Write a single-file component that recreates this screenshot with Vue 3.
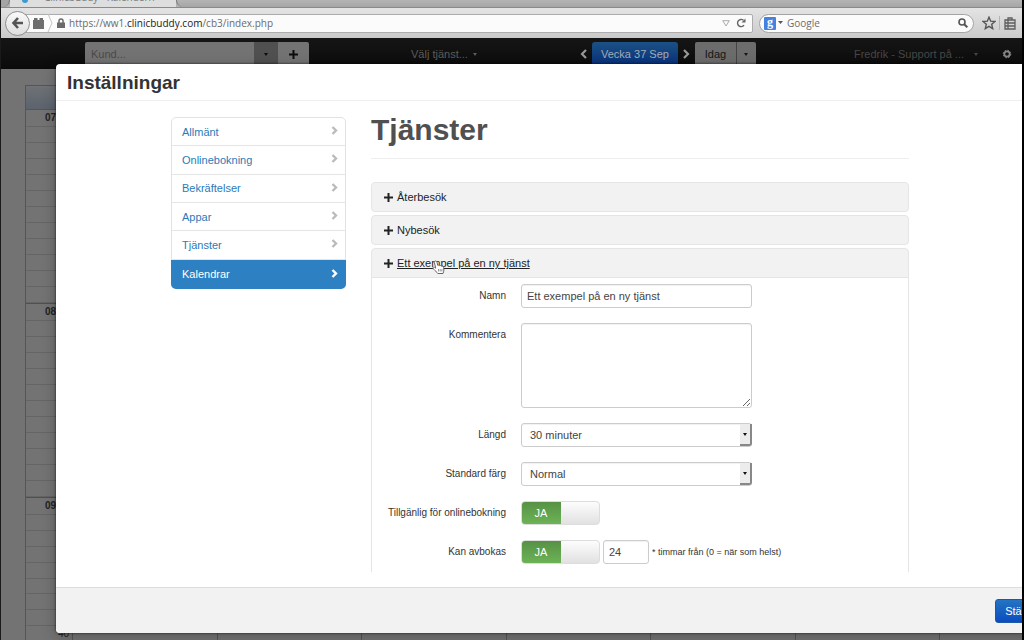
<script setup>
import { ref } from 'vue'

const navItems = ['Allmänt', 'Onlinebokning', 'Bekräftelser', 'Appar', 'Tjänster', 'Kalendrar']
const active = ref('Kalendrar')
const hours = ['07', '08', '09']
const name = ref('Ett exempel på en ny tjänst')
const comment = ref('')
const length = ref('30 minuter')
const colour = ref('Normal')
const online = ref(true)
const cancel = ref(true)
const cancelHours = ref('24')
</script>

<template>
  <div class="screen">
    <header class="browser">
      <div class="tabs">
        <span class="tab-prev"></span>
        <span class="tab"><i class="favicon"></i><span class="tab-title">Clinicbuddy - Kalendern</span></span>
        <span class="tab-rest"></span>
      </div>
      <div class="toolbar">
        <button class="back" type="button" aria-label="Tillbaka">
          <svg width="14" height="14" viewBox="0 0 14 14"><path d="M7 2 2.500 7 7 12M3 7h9" fill="none" stroke="#555" stroke-width="2.600" /></svg>
        </button>
        <div class="address">
          <svg class="site" width="11" height="11" viewBox="0 0 11 11"><path d="M0 2h11v9H0zM1 0h3.500v2H1zM6.500 0H10v2H6.500z" fill="#6d6d6d" /></svg>
          <svg class="crumb" width="6" height="18" viewBox="0 0 6 18"><path d="M1 0 5 9 1 18" fill="none" stroke="#c4c4c4" /></svg>
          <svg class="lock" width="8" height="10" viewBox="0 0 8 10"><path d="M0 4.500h8V10H0z" fill="#6a6a6a" /><path d="M2 5V3a2 2 0 0 1 4 0v2" fill="none" stroke="#6a6a6a" stroke-width="1.500" /></svg>
          <span class="url">https://ww1.<b>clinicbuddy.com</b>/cb3/index.php</span>
          <svg width="8" height="7" viewBox="0 0 8 7"><path d="M.7.7h6.600L4 6z" fill="none" stroke="#aaa" /></svg>
          <svg class="reload" width="10" height="10" viewBox="0 0 10 10"><path d="M8 7.200A3.600 3.600 0 1 1 7.500 2.300" fill="none" stroke="#666" stroke-width="1.400" /><path d="M5.500 4.500h4V.500z" fill="#666" /></svg>
        </div>
        <div class="search">
          <span class="g">g</span>
          <svg width="6" height="4" viewBox="0 0 6 4"><path d="M0 0h5L2.500 3z" fill="#555" /></svg>
          <input type="text" placeholder="Google" aria-label="Sök" />
          <svg width="10" height="10" viewBox="0 0 10 10"><circle cx="4" cy="4" r="3" fill="none" stroke="#555" stroke-width="1.600" /><path d="M6.200 6.200 9.300 9.300" stroke="#555" stroke-width="2" /></svg>
        </div>
        <svg class="star" width="14" height="14" viewBox="0 0 14 14"><path d="M7 1.200 8.700 5.200 13 5.500 9.700 8.300 10.700 12.600 7 10.300 3.300 12.600 4.300 8.300 1 5.500 5.300 5.200z" fill="none" stroke="#555" stroke-width="1.400" /></svg>
        <i class="sep"></i>
        <svg class="clip" width="12" height="13" viewBox="0 0 12 13"><path d="M1 3h10v9H1zM4 3V1h4v2M1 6h10M1 9h10M4 3.500v8.500" fill="none" stroke="#5e5e5e" stroke-width="1.300" /></svg>
      </div>
    </header>

    <nav class="appbar">
      <div class="combo">
        <input type="text" placeholder="Kund..." aria-label="Kund" />
        <button class="drop" type="button" aria-label="Visa kunder"><i class="caret"></i></button>
        <button class="add" type="button" aria-label="Ny kund"><svg width="9" height="9" viewBox="0 0 9 9"><path d="M3.500 0h2v3.500H9v2H5.500V9h-2V5.500H0v-2h3.500z" fill="#0c0c0c" /></svg></button>
      </div>
      <button class="plain pick" type="button">Välj tjänst... <i class="caret"></i></button>
      <div class="week">
        <button class="plain" type="button" aria-label="Föregående"><svg width="7" height="10" viewBox="0 0 7 10"><path d="M6 1 2 5l4 4" fill="none" stroke="#999" stroke-width="2.200" /></svg></button>
        <button class="current" type="button">Vecka 37 Sep</button>
        <button class="plain" type="button" aria-label="Nästa"><svg width="7" height="10" viewBox="0 0 7 10"><path d="M1 1l4 4-4 4" fill="none" stroke="#999" stroke-width="2.200" /></svg></button>
      </div>
      <div class="today">
        <button type="button">Idag</button>
        <button class="drop-day" type="button" aria-label="Välj datum"><i class="caret"></i></button>
      </div>
      <button class="plain user" type="button">Fredrik - Support på ... <i class="caret"></i></button>
      <button class="plain gear" type="button" aria-label="Inställningar">
        <svg width="10" height="10" viewBox="0 0 10 10"><circle cx="5" cy="5" r="2.700" fill="none" stroke="#888" stroke-width="1.800" /><circle cx="5" cy="5" r="3.800" fill="none" stroke="#888" stroke-width="1" stroke-dasharray="1.600 1.380" /></svg>
      </button>
    </nav>

    <main class="calendar">
      <div class="sheet">
        <div class="times">
          <div class="day-head"></div>
          <div v-for="h in hours" :key="h" class="hour">
            <span v-for="n in 12" :key="n" class="slot"><b v-if="n === 1">{{ h }}</b><em v-if="h === '09' && n === 9">40</em></span>
          </div>
        </div>
        <div v-for="d in 7" :key="d" class="day"></div>
      </div>
    </main>

    <section class="modal" role="dialog" aria-labelledby="dialog-title">
      <header class="modal-head"><h2 id="dialog-title">Inställningar</h2></header>
      <div class="modal-body">
        <nav class="side">
          <a v-for="item in navItems" :key="item" href="#" :class="{ active: item === active }" @click.prevent="active = item">
            {{ item }}
            <svg width="7" height="9" viewBox="0 0 7 9"><path d="M1.500 1 5 4.500 1.500 8" fill="none" stroke="currentColor" stroke-width="2.400" /></svg>
          </a>
        </nav>
        <div class="content">
          <h1>Tjänster</h1>
          <div class="accordion">
            <div class="group"><button class="toggle-head" type="button"><svg class="plus" width="9" height="9" viewBox="0 0 9 9"><path d="M3.500 0h2v3.500H9v2H5.500V9h-2V5.500H0v-2h3.500z" /></svg><span>Återbesök</span></button></div>
            <div class="group"><button class="toggle-head" type="button"><svg class="plus" width="9" height="9" viewBox="0 0 9 9"><path d="M3.500 0h2v3.500H9v2H5.500V9h-2V5.500H0v-2h3.500z" /></svg><span>Nybesök</span></button></div>
            <div class="group open">
              <button class="toggle-head hover" type="button" aria-expanded="true">
                <svg class="plus" width="9" height="9" viewBox="0 0 9 9"><path d="M3.500 0h2v3.500H9v2H5.500V9h-2V5.500H0v-2h3.500z" /></svg><span>Ett exempel på en ny tjänst</span>
                <svg class="pointer" width="13" height="15" viewBox="0 0 13 15"><path d="M3.500 1c1 0 1.300.7 1.500 1.500l.8 3c.8-.7 1.600-.4 2 .3.800-.5 1.600-.2 1.900.5.900-.3 1.700.2 1.900 1.100l.3 2.600c0 1.400-.6 2-.9 3.500H5.800C5 12 3.200 11 1.800 9.400.9 8.400.7 7.600 1.300 7.300c.9-.4 1.700.3 2.400.9L2.400 2.500C2.200 1.600 2.700 1 3.500 1z" fill="#fff" stroke="#666" /><path d="M6.500 9v2.500M8.200 9v2.500M9.900 9v2.500" stroke="#777" stroke-width=".8" /></svg>
              </button>
              <form class="form" @submit.prevent>
                <label for="name">Namn</label>
                <div class="field"><input id="name" v-model="name" class="box wide" type="text" /></div>
                <label for="comment">Kommentera</label>
                <div class="field"><textarea id="comment" v-model="comment" class="box wide"></textarea></div>
                <label for="length">Längd</label>
                <div class="field"><span class="select"><select id="length" v-model="length" class="box wide"><option>30 minuter</option><option>60 minuter</option></select><i class="arrow"><i class="caret"></i></i></span></div>
                <label for="colour">Standard färg</label>
                <div class="field"><span class="select"><select id="colour" v-model="colour" class="box wide"><option>Normal</option></select><i class="arrow"><i class="caret"></i></i></span></div>
                <label for="online">Tillgänlig för onlinebokning</label>
                <div class="field"><label class="switch"><input id="online" v-model="online" type="checkbox" /><span>JA</span></label></div>
                <label for="cancel">Kan avbokas</label>
                <div class="field">
                  <label class="switch"><input id="cancel" v-model="cancel" type="checkbox" /><span>JA</span></label>
                  <input id="cancel-hours" v-model="cancelHours" class="box small" type="text" />
                  <label class="hint" for="cancel-hours">* timmar från (0 = när som helst)</label>
                </div>
              </form>
            </div>
          </div>
        </div>
      </div>
      <footer class="modal-foot"><button class="close" type="button">Stäng</button></footer>
    </section>
  </div>
</template>

<style>
html, body { margin: 0; background: #000; overflow: hidden; }
</style>

<style scoped>
* { box-sizing: border-box; }
button, input, select, textarea { font: inherit; color: inherit; margin: 0; }
button { border: 0; padding: 0; background: none; cursor: pointer; }
svg { display: block; flex: none; }

.screen {
  position: relative;
  display: flex;
  flex-direction: column;
  height: 100vh;
  overflow: hidden;
  border-left: 1px solid #1a1a1a;
  border-right: 2px solid #000;
  background: #737373;
  font: 11px/16px "Liberation Sans", Arial, sans-serif;
  color: #333;
}

/* Browser window */
.browser { flex: none; font-family: "Open Sans", "Noto Sans", sans-serif; }
.tabs { display: flex; height: 8px; overflow: hidden; background: #b2b2b2; border-bottom: 1px solid #8a8a8a; }
.tab-prev { width: 9px; background: #a4a4a4; border-right: 1px solid #777; border-bottom-right-radius: 7px; }
.tab { display: flex; gap: 16px; width: 166px; height: 8px; padding-left: 12px; background: #dedede; overflow: hidden; }
.favicon { width: 6px; height: 3px; background: #3d9ad0; border-radius: 0 0 3px 3px; flex: none; }
.tab-title { margin-top: -11px; font-size: 10px; line-height: 16px; color: #777; white-space: nowrap; }
.tab-rest { flex: 1; border-left: 1px solid #777; border-bottom-left-radius: 7px; background: linear-gradient(#b4b4b4, #a6a6a6); }
.toolbar { display: flex; align-items: center; height: 30px; padding: 0 6px 0 4px; background: linear-gradient(#e4e4e4, #cacaca); }
.back { display: grid; place-items: center; width: 25px; height: 25px; flex: none; border: 1px solid #8e8e8e; border-radius: 50%; background: linear-gradient(#fafafa, #dedede); z-index: 1; }
.address { display: flex; align-items: center; flex: 1; min-width: 0; height: 19px; margin-left: -10px; padding: 0 6px 0 12px; border: 1px solid #acacac; border-radius: 2px; background: #fbfbfb; }
.crumb { margin: 0 4px 0 3px; }
.url { flex: 1; margin-left: 4px; font-size: 10px; color: #6b6b6b; white-space: nowrap; overflow: hidden; }
.url b { font-weight: 500; color: #222; }
.reload { margin-left: 6px; }
.search { display: flex; align-items: center; width: 215px; height: 19px; margin-left: 6px; padding: 0 5px 0 4px; border: 1px solid #a4a4a4; border-radius: 10px; background: #fbfbfb; }
.g { width: 12px; height: 13px; margin-right: 2px; border-radius: 1px; background: #4482e0; color: #fff; font: bold 12px/10px "Liberation Serif", serif; text-align: center; }
.search input { flex: 1; min-width: 0; padding: 0 3px; border: 0; outline: 0; background: none; font-size: 10px; }
.search input::placeholder { color: #6e6e6e; opacity: 1; }
.star { margin: 0 3px 0 8px; }
.sep { width: 1px; height: 14px; background: #b4b4b4; }
.clip { margin-left: 4px; }

/* Application bar */
.appbar { display: flex; flex: none; height: 31px; padding: 4px 10px 0 84px; background: linear-gradient(#151515, #0b0b0b); color: #5c5c5c; }
.appbar button, .appbar input { height: 24px; }
.caret { display: block; width: 0; border: 2px solid transparent; border-top: 3px solid currentColor; border-bottom: 0; }
.combo { display: flex; width: 224px; }
.combo input { flex: 1; min-width: 0; padding: 0 6px; border: 0; background: #737373; border-radius: 2px 0 0 2px; }
.combo input::placeholder { color: #4a4a4a; opacity: 1; }
.drop, .add, .drop-day { display: grid; place-items: center; }
.combo .drop { width: 24px; background: #505050; color: #0c0c0c; }
.combo .add { width: 31px; background: #737373; border-radius: 0 2px 2px 0; }
.plain { display: flex; align-items: center; gap: 5px; white-space: nowrap; }
.pick { margin-left: 102px; }
.week { display: flex; gap: 5px; margin-left: auto; }
.current { width: 86px; border-radius: 3px 3px 0 0; background: linear-gradient(#1b5184, #082f7c); color: #a3adb8; }
.today { display: flex; margin-left: 5px; color: #161616; }
.today button { width: 41px; background: #6c6c6c; border-radius: 2px 0 0 2px; }
.today .drop-day { width: 20px; border-left: 1px solid #454545; border-radius: 0 2px 2px 0; }
.user { margin-left: 98px; gap: 10px; color: #474747; }
.gear { margin-left: 24px; }

/* Calendar sheet behind the dialog */
.calendar { flex: 1; min-height: 0; overflow: hidden; padding: 16px 0 0 24px; background: #737373; }
.sheet { display: grid; grid-template-columns: 46px repeat(7, 1fr); width: calc(100% + 62px); border: 1px solid #555; border-right: 0; }
.day-head { height: 24px; background: linear-gradient(#6f7276, #5b636d); border-bottom: 1px solid #555; }
.hour { display: grid; grid-auto-rows: 1fr; height: 194px; border-bottom: 1px solid #505050; }
.slot { display: flex; justify-content: space-between; padding: 0 3px 0 19px; border-bottom: 1px solid #656565; font-size: 10px; line-height: 16px; color: #222; }
.slot em { margin-left: auto; font-style: normal; }
.day { border-left: 1px solid #555; }

/* Dialog */
.modal {
  position: absolute;
  top: 64px;
  left: 55px;
  right: -50px;
  bottom: 7px;
  display: flex;
  flex-direction: column;
  overflow: hidden;
  border-radius: 4px;
  background: #fff;
  box-shadow: 0 0 2px 1px rgba(0, 0, 0, .35), 0 4px 14px 2px rgba(0, 0, 0, .18);
}
.modal-head { flex: none; height: 37px; padding: 6px 11px; border-bottom: 1px solid #eee; }
h2 { margin: 0; font-size: 19px; line-height: 25px; color: #333; }
.modal-body { display: flex; gap: 25px; flex: 1; min-height: 0; overflow: hidden; padding: 0 163px 0 115px; margin-bottom: 15px; }
.side { display: grid; grid-auto-rows: 1fr; flex: none; width: 175px; height: 172px; margin-top: 16px; border: 1px solid #e2e2e2; border-radius: 5px; }
.side a { display: flex; align-items: center; justify-content: space-between; margin: 0 -1px; padding: 0 8px 0 11px; border-bottom: 1px solid #e5e5e5; color: #2a7ab8; text-decoration: none; }
.side a svg { color: #bbb; margin-bottom: 2px; }
.side a.active { margin-bottom: -1px; border: 0; border-radius: 0 0 5px 5px; background: #2d80c1; color: #fff; }
.side a.active svg { color: #fff; }
.content { flex: 1; min-width: 0; }
h1 { margin: 0 0 23px; padding: 8px 0 8px; border-bottom: 1px solid #eee; font-size: 30px; line-height: 41px; color: #505050; }
.accordion { display: flex; flex-direction: column; gap: 3px; }
.group { border: 1px solid #e5e5e5; border-radius: 4px; background: #f2f2f2; }
.toggle-head { position: relative; display: flex; align-items: center; width: 100%; height: 28px; padding: 0 12px; color: #222; text-align: left; }
.toggle-head .plus { margin-right: 2px; fill: #222; }
.toggle-head span { padding-left: 2px; }
.hover span { text-decoration: underline; }
.pointer { position: absolute; left: 60px; top: 11px; }
.open { overflow: hidden; }
.form { display: grid; grid-template-columns: 134px 1fr; gap: 15px; padding: 6px 0 60px; border-top: 1px solid #e5e5e5; background: #fff; }
.form > label { font-size: 10px; line-height: 24px; text-align: right; white-space: nowrap; color: #333; }
.field { display: flex; align-items: center; }
.box { height: 24px; border: 1px solid #ccc; border-radius: 3px; padding: 0 5px; background: #fff; color: #444; outline: 0; box-shadow: inset 0 1px 1px rgba(0, 0, 0, .06); }
.wide { width: 231px; }
textarea.box { display: block; height: 85px; padding: 4px 5px; }
.select { position: relative; display: flex; }
select.box { appearance: none; padding: 0 16px 0 8px; }
.arrow { position: absolute; top: 1px; right: 0; bottom: 1px; display: grid; place-items: center; width: 12px; border-right: 2px solid #888; border-bottom: 2px solid #888; border-radius: 0 0 3px 0; background: #ececec; color: #111; pointer-events: none; }
.switch { position: relative; display: flex; width: 79px; height: 24px; border: 1px solid #ddd; border-radius: 4px; overflow: hidden; background: linear-gradient(#fdfdfd, #e1e1e1); }
.switch input { position: absolute; inset: 0; width: 100%; height: 100%; opacity: 0; cursor: pointer; }
.switch span { width: 40px; margin: -1px 0 -1px -1px; background: linear-gradient(#569044, #6eb457); color: #fff; font-size: 11px; line-height: 24px; text-align: center; }
.small { width: 46px; margin-left: 3px; }
.hint { margin-left: 3px; font-size: 9px; white-space: nowrap; }
.modal-foot { display: flex; align-items: flex-start; justify-content: flex-end; flex: none; height: 46px; padding: 11px 28px 0 0; border-top: 1px solid #ddd; background: #f2f2f2; }
.close { width: 49px; height: 24px; border: 1px solid #1a59a8; border-radius: 3px; background: linear-gradient(#2474c2, #0b4cc0); color: #fff; }
</style>
